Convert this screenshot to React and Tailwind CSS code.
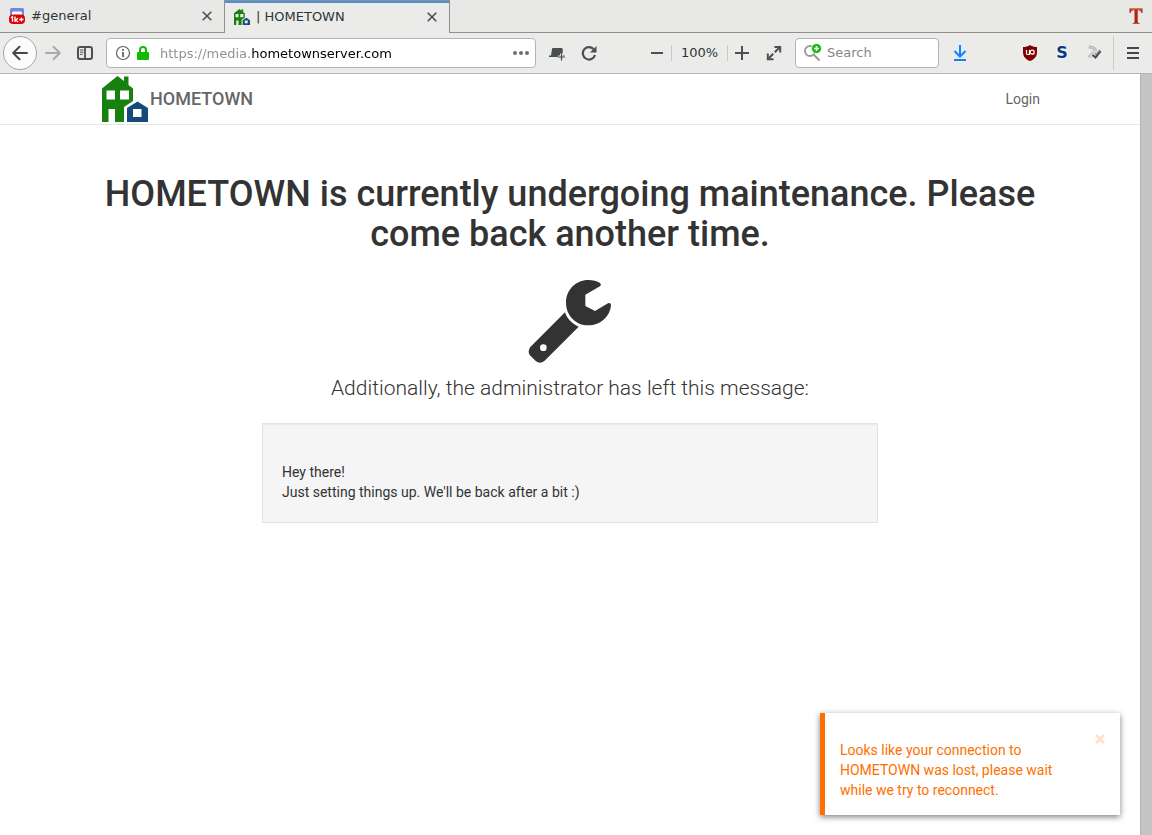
import React from "react";

function HouseLogo({ className }) {
  return (
    <svg viewBox="0 0 46 46" className={className} aria-hidden="true">
      <path
        fill="#16810f"
        fillRule="evenodd"
        d="M0 12.5 15.5 0 22 5V0.500h4.500v8.500L31 12.5V25l-9 6v15H13V33H6.500v13H0zM4.500 14.500v9H13v-9zM18 14.500v9h9v-9z"
      />
      <path
        fill="#154a79"
        fillRule="evenodd"
        d="M25 32 35.500 25.500 46 32v14H25zM31 33v8h8.500v-8z"
      />
    </svg>
  );
}

function CloseIcon() {
  return (
    <svg viewBox="0 0 10 10" className="size-2.5" fill="none" stroke="#4a4f51" strokeWidth="1.6" aria-hidden="true">
      <path d="M.7.7l8.600 8.600M9.300.7L.7 9.300" />
    </svg>
  );
}

function ChatIcon() {
  return (
    <svg viewBox="0 0 16 16" className="size-4" aria-hidden="true">
      <rect x="1" y="0" width="14" height="12" rx="1.500" fill="#7289da" />
      <rect x="3" y="3.500" width="10" height="5" rx="1.500" fill="#fff" />
      <rect x="0" y="6.500" width="16" height="9.500" rx="4" fill="#e00000" />
      <path d="M2 9.800l1.500-1v5M6 8.500v5.500M9 10.300L6.500 12l2.700 2M10.300 11.500h4.200M12.400 9.400v4.200" fill="none" stroke="#fff" strokeWidth="1.300" />
    </svg>
  );
}

function Wrench() {
  return (
    <svg viewBox="86 42 252 252" className="size-[84px]" fill="#333" aria-hidden="true">
      <path d="M267 45c14 0 27 3 35 9q5 4 1 9L258 89v34l29 15 39-23q8-3 9 4c-2 35-32 62-68 62-38 0-67-30-67-68s29-68 67-68z" />
      <path
        fillRule="evenodd"
        d="M197 142c7 20 21 34 41 43L135 288q-12 10-25 1L91 270q-7-12 2-24zM132 238a10 10 0 1 0 0 20a10 10 0 1 0 0-20z"
      />
    </svg>
  );
}

function TabBar() {
  return (
    <div className="flex h-[33px] items-stretch bg-[#e8e8e7] text-[13px] text-[#2e3436]">
      <div className="flex w-[224px] items-center border-b border-[#8e8f8e] pr-[7px] pl-[9px]">
        <ChatIcon />
        <span className="ml-1.5 flex-1">#general</span>
        <button type="button" aria-label="Close #general tab" className="flex size-5 items-center justify-center">
          <CloseIcon />
        </button>
      </div>
      <div className="flex w-[226px] items-center border-x border-t border-[#8e8f8e] bg-[#ebebea] pr-[7px] pl-[9px] shadow-[inset_0_2px_0_#4a90d9]">
        <HouseLogo className="size-4" />
        <span className="ml-1.5 flex-1">| HOMETOWN</span>
        <button type="button" aria-label="Close HOMETOWN tab" className="flex size-5 items-center justify-center">
          <CloseIcon />
        </button>
      </div>
      <div className="flex flex-1 items-center justify-end border-b border-[#8e8f8e] pr-2">
        <button type="button" aria-label="Text tools" className="flex size-4 items-center justify-center">
          <svg viewBox="0 0 14 16" className="h-4 w-3.5" aria-hidden="true">
            <path d="M.5.5h13V5l-1 0c-.5-2-1-2.800-3-2.800H8.700V13c0 1.500.5 2 2 2v.7H3.600V15c1.400 0 1.900-.5 1.900-2V2.200H4.500c-2 0-2.500.8-3 2.800h-1z" fill="#b5220d" />
            <path d="M.5.5h13v1.200H.5z" fill="#d5694f" />
          </svg>
        </button>
      </div>
    </div>
  );
}

function Toolbar() {
  return (
    <div className="flex h-[41px] items-center border-b border-[#b5b6b4] bg-[#ebebea] pr-[13px] pl-[3px] text-[13px] text-[#2e3436]">
      <button type="button" aria-label="Back" className="flex size-[34px] items-center justify-center rounded-full border border-[#a7a8a6] bg-[#fbfbfb]">
        <svg viewBox="0 0 16 16" className="size-4" fill="none" stroke="#43494b" strokeWidth="2" strokeLinecap="round" strokeLinejoin="round" aria-hidden="true">
          <path d="M15 8H1.500M7.500 1.800L1.200 8l6.300 6.200" />
        </svg>
      </button>
      <button type="button" aria-label="Forward" disabled className="ml-2 flex size-4 items-center justify-center">
        <svg viewBox="0 0 16 16" className="size-4" fill="none" stroke="#a9abaa" strokeWidth="2" strokeLinecap="round" strokeLinejoin="round" aria-hidden="true">
          <path d="M1 8h13.500M8.500 1.800L14.800 8l-6.300 6.200" />
        </svg>
      </button>
      <button type="button" aria-label="Sidebars" className="ml-4 flex size-4 items-center justify-center">
        <svg viewBox="0 0 16 16" className="size-4" fill="none" stroke="#4a4f51" aria-hidden="true">
          <rect x="1" y="2" width="14" height="12" rx="2" strokeWidth="2" />
          <path d="M8 2v12" strokeWidth="1.800" />
          <path d="M3 5h3.500M3 7.200h3.500M3 9.400h2.500" />
        </svg>
      </button>

      <div className="ml-[13px] flex h-[30px] w-[430px] min-w-0 items-center rounded border border-[#b2b4b1] bg-white pr-1.5 pl-2">
        <button type="button" aria-label="Site information" className="size-4">
          <svg viewBox="0 0 16 16" className="size-4" fill="none" stroke="#5c6062" aria-hidden="true">
            <circle cx="8" cy="8" r="6.500" strokeWidth="1.200" />
            <path d="M8 4v1.800M8 7v5" strokeWidth="1.800" />
          </svg>
        </button>
        <svg viewBox="0 0 12 14" className="ml-1.5 h-3.5 w-3" aria-hidden="true">
          <path d="M3 7V4a3 3 0 0 1 6 0v3" fill="none" stroke="#12bc00" strokeWidth="2" />
          <rect x="0" y="6" width="12" height="8" rx="1" fill="#12bc00" />
        </svg>
        <input
          type="text"
          aria-label="Address"
          defaultValue="https://media.hometownserver.com"
          className="ml-[11px] h-6 min-w-0 flex-1 bg-[linear-gradient(to_right,#8a8d8e_90px,#000_90px)] bg-clip-text text-transparent caret-black outline-none"
        />
        <button type="button" aria-label="Page actions" className="flex size-4 items-center justify-center">
          <svg viewBox="0 0 16 4" className="h-1 w-4" fill="#6c6f70" aria-hidden="true">
            <circle cx="2" cy="2" r="2" />
            <circle cx="8" cy="2" r="2" />
            <circle cx="14" cy="2" r="2" />
          </svg>
        </button>
      </div>

      <button type="button" aria-label="New container tab" className="ml-[13px] size-4">
        <svg viewBox="0 0 16 16" className="size-4" aria-hidden="true">
          <path d="M4 3h8.500q1.200 0 1.200 1V10h2v2H0v-1.500h2L3 4q0-1 1-1z" fill="#4a4f51" />
          <path d="M12.500 8.500v7M9 12h7" stroke="#ebebea" strokeWidth="3" />
          <path d="M12.500 8.500v7M9 12h7" stroke="#43494b" strokeWidth="1.200" />
        </svg>
      </button>
      <button type="button" aria-label="Reload" className="ml-4 size-4">
        <svg viewBox="0 0 16 16" className="size-4" fill="none" stroke="#4a4f51" aria-hidden="true">
          <path d="M12.500 4A6.200 6.200 0 1 0 14 10" strokeWidth="2.200" />
          <path d="M15.500 1v6.500H9z" fill="#4a4f51" stroke="none" />
        </svg>
      </button>

      <div className="ml-auto flex items-center">
        <button type="button" aria-label="Zoom out" className="flex size-4 items-center justify-center">
          <svg viewBox="0 0 14 14" className="size-3.5" stroke="#4a4f51" strokeWidth="2" aria-hidden="true">
            <path d="M1 7h12" />
          </svg>
        </button>
        <span className="ml-1.5 h-4 w-px bg-[#c9cac8]" />
        <button type="button" aria-label="Reset zoom" className="w-[55px] text-center">100%</button>
        <span className="mr-1.5 h-4 w-px bg-[#c9cac8]" />
        <button type="button" aria-label="Zoom in" className="flex size-4 items-center justify-center">
          <svg viewBox="0 0 14 14" className="size-3.5" stroke="#4a4f51" strokeWidth="2" aria-hidden="true">
            <path d="M0 7h14M7 0v14" />
          </svg>
        </button>
        <button type="button" aria-label="Full screen" className="ml-4 size-4">
          <svg viewBox="0 0 16 16" className="size-4" aria-hidden="true">
            <path d="M3 13L13 3" stroke="#4a4f51" strokeWidth="2" strokeDasharray="6 2.140" />
            <path d="M8.500 1.900h5.700v5.700M1.800 8.500v5.700h5.700" fill="none" stroke="#4a4f51" strokeWidth="2" />
          </svg>
        </button>
      </div>

      <label className="ml-[13px] flex h-[30px] w-[144px] items-center rounded border border-[#b2b4b1] bg-white pl-2">
        <svg viewBox="0 0 18 18" className="size-[18px] shrink-0" fill="none" aria-hidden="true">
          <circle cx="6" cy="7" r="5" stroke="#999b9b" strokeWidth="2" />
          <path d="M9.500 10.500l6 6" stroke="#999b9b" strokeWidth="2" />
          <circle cx="12.500" cy="4.500" r="5" fill="#12bc00" stroke="#fff" strokeWidth=".8" />
          <path d="M12.500 2v5M10 4.500h5" stroke="#fff" strokeWidth="1.500" />
        </svg>
        <input type="search" aria-label="Search" placeholder="Search" className="ml-[5px] min-w-0 flex-1 bg-transparent outline-none placeholder:text-[#858788]" />
      </label>

      <button type="button" aria-label="Downloads" className="ml-[13px] size-4">
        <svg viewBox="0 0 16 16" className="size-4" fill="none" stroke="#0a84ff" strokeWidth="2" aria-hidden="true">
          <path d="M8 0v11M2.500 6L8 11.500 13.500 6M2 15h12" />
        </svg>
      </button>
      <button type="button" aria-label="uBlock" className="ml-[54px] size-4">
        <svg viewBox="0 0 16 16" className="size-4" fill="none" aria-hidden="true">
          <path d="M8 0c2 1.500 4.500 2 7 2v5c0 5-3 7.500-7 9-4-1.500-7-4-7-9V2c2.500 0 5-.5 7-2z" fill="#800000" />
          <path d="M4.500 5v3.200q0 1.300 1.500 1.300h1.500V5" stroke="#fff" strokeWidth="1.200" />
          <circle cx="10.200" cy="7.200" r="2" stroke="#fff" strokeWidth="1.200" />
        </svg>
      </button>
      <button type="button" aria-label="Stylish" className="ml-4 size-4 text-center text-base leading-4 font-bold text-[#053a86] [text-shadow:0_0_2px_#fff,0_0_2px_#fff]">
        S
      </button>
      <button type="button" aria-label="Build tools" className="ml-4 size-4">
        <svg viewBox="0 0 16 16" className="size-4" fill="none" aria-hidden="true">
          <path d="M3 1.500c4-.8 6 .8 7.500 3.500L4 13M2.500 3c3.500-.3 5 .5 6 2.500L2 12" stroke="#b4b5b4" strokeWidth="1.300" />
          <path d="M4 12l6-6.500" stroke="#d9dad9" strokeWidth="2.400" />
          <path d="M6.500 10l3 2.500 5-6.500" stroke="#4a4c4d" strokeWidth="2.200" />
          <path d="M9 8l1 1.500L14 5" stroke="#888a8a" strokeWidth="1.200" />
        </svg>
      </button>
      <span className="ml-[11px] h-[34px] w-px bg-[#cbccca]" />
      <button type="button" aria-label="Menu" className="ml-[13px] flex h-4 w-3 items-center justify-center">
        <svg viewBox="0 0 12 12" className="size-3" stroke="#43494b" strokeWidth="2" aria-hidden="true">
          <path d="M0 1h12M0 6h12M0 11h12" />
        </svg>
      </button>
    </div>
  );
}

function Notification() {
  return (
    <div
      role="alert"
      className="absolute right-5 bottom-5 flex w-[300px] items-start border-l-5 border-[#ff6f00] bg-white pt-[27px] pr-[14px] pb-[15px] pl-[15px] text-sm leading-5 text-[#ff6f00] shadow-[0_2px_6px_rgba(0,0,0,0.5)]"
    >
      <p className="w-[220px]">Looks like your connection to HOMETOWN was lost, please wait while we try to reconnect.</p>
      <button type="button" aria-label="Dismiss" className="-mt-[7px] ml-auto flex size-3 items-center justify-center">
        <svg viewBox="0 0 10 10" className="size-2.5" stroke="#ffe0ca" strokeWidth="2.600" aria-hidden="true">
          <path d="M1 1l8 8M9 1L1 9" />
        </svg>
      </button>
    </div>
  );
}

export default function App() {
  return (
    <div className="flex min-h-screen flex-col bg-white font-['DejaVu_Sans',sans-serif]">
      <TabBar />
      <Toolbar />
      <div className="flex flex-1 font-[Roboto,sans-serif] text-[#333]">
        <div className="relative flex-1">
          <header className="border-b border-[#e7e7e7]">
            <div className="mx-auto flex h-[50px] max-w-[970px] items-center justify-between px-[15px] text-[#666]">
              <a href="#home" className="flex items-center pl-0.5 text-lg font-medium">
                <HouseLogo className="size-[46px]" />
                <span className="ml-0.5">HOMETOWN</span>
              </a>
              <a href="#login" className="text-sm">Login</a>
            </div>
          </header>
          <main className="mx-auto flex max-w-[970px] flex-col items-center px-[15px] pt-[49px]">
            <h1 className="text-center text-4xl leading-10 font-medium">
              HOMETOWN is currently undergoing maintenance. Please come back another time.
            </h1>
            <div className="mt-[25px]">
              <Wrench />
            </div>
            <p className="mt-[10px] text-center text-[21px] leading-[30px] font-light">
              Additionally, the administrator has left this message:
            </p>
            <div className="mt-5 w-full max-w-[616px] border border-[#e3e3e3] bg-[#f5f5f5] px-[19px] pt-[38px] pb-5 text-sm leading-5 shadow-[inset_0_1px_1px_rgba(0,0,0,0.05)]">
              <p>Hey there!</p>
              <p>Just setting things up. We'll be back after a bit :)</p>
            </div>
          </main>
          <Notification />
        </div>
        <div className="w-3 border-l border-[#b3b5b4] bg-[#c3c5c4]" />
      </div>
    </div>
  );
}
